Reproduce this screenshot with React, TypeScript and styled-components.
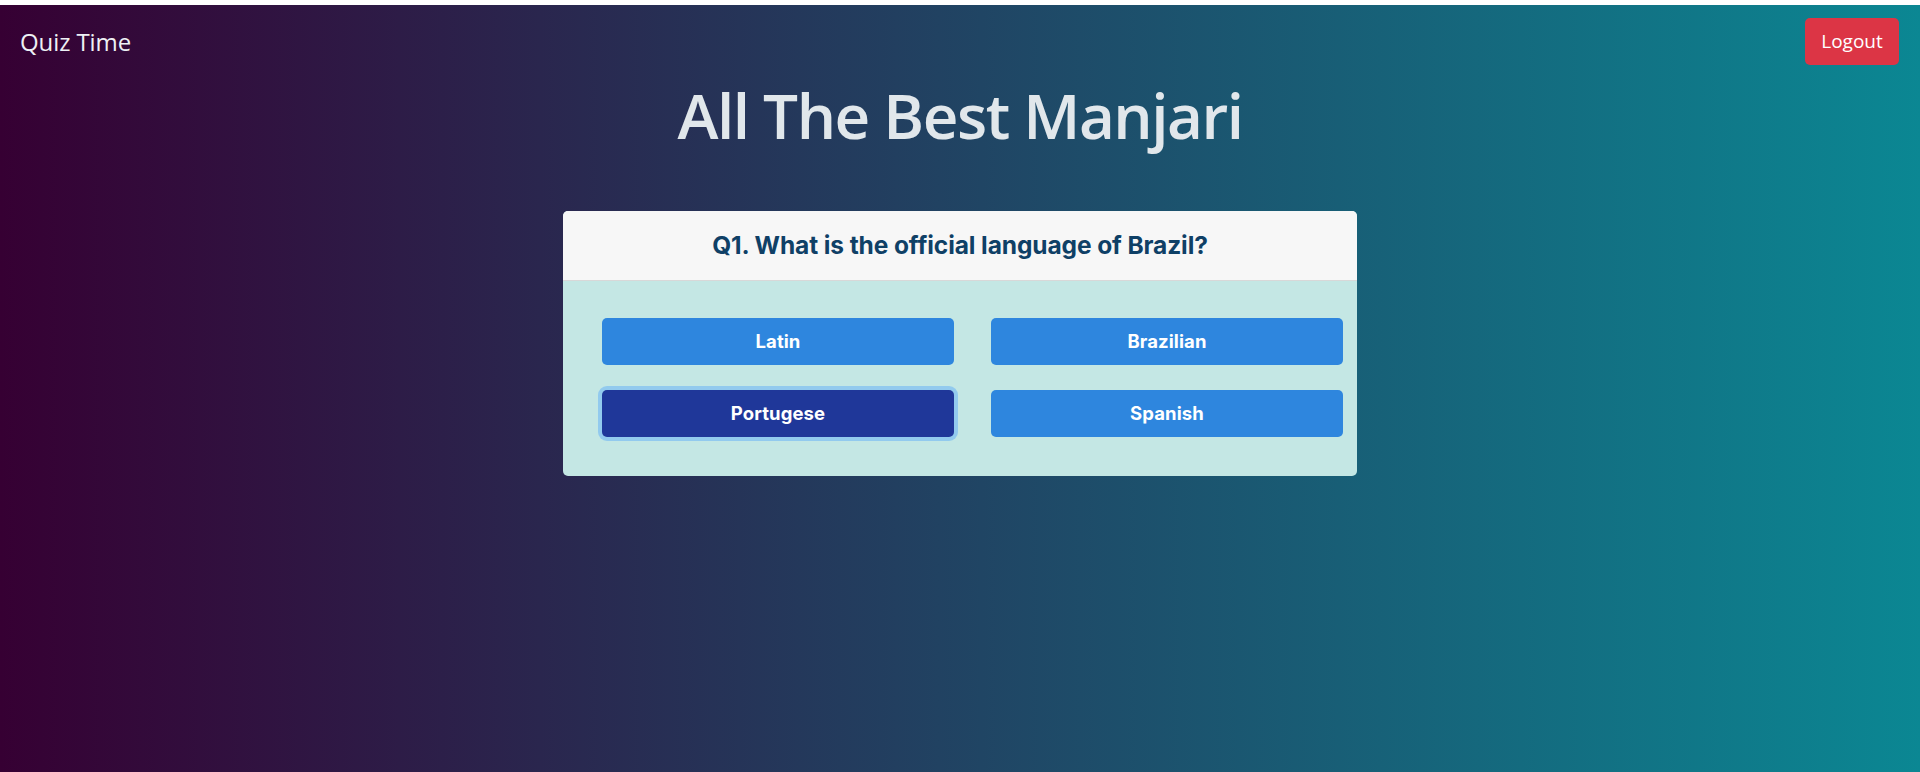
import React, { useState } from "react";
import styled, { createGlobalStyle } from "styled-components";

const GlobalStyle = createGlobalStyle`
  * { box-sizing: border-box; }
  html, body { margin: 0; padding: 0; background: #ffffff; }
  body { font-family: "Open Sans", "Noto Sans", sans-serif; }
`;

const Page = styled.div`
  padding-top: 5px;
  background: #ffffff;
`;

const Backdrop = styled.div`
  min-height: 767px;
  background: linear-gradient(to right, #360033, #0b8793);
  display: flex;
  flex-direction: column;
`;

const NavBar = styled.nav`
  display: flex;
  align-items: center;
  justify-content: space-between;
  padding: 12.7px 21px 12.5px 20px;
`;

const Brand = styled.span`
  font-family: "Open Sans", sans-serif;
  font-size: 24px;
  color: #eef1f5;
  letter-spacing: -0.1px;
`;

const LogoutButton = styled.button`
  font-family: "Open Sans", sans-serif;
  font-size: 19px;
  color: #ffffff;
  background: #dc3545;
  border: none;
  border-radius: 5px;
  height: 47px;
  width: 94px;
  padding: 0;
  cursor: pointer;
`;

const Title = styled.h1`
  margin: 0.7px 0 0;
  text-align: center;
  font-family: "Open Sans", sans-serif;
  font-weight: 600;
  font-size: 62px;
  line-height: 1.2;
  color: #e1e7eb;
  letter-spacing: -1.5px;
`;

const Card = styled.section`
  width: 794px;
  margin: 59px auto 0;
  border-radius: 5px;
  overflow: hidden;
  background: #c4e7e4;
`;

const CardHeader = styled.header`
  background: #f7f7f7;
  border-bottom: 1px solid #d8d8d8;
  padding: 19px 0 20px;
  text-align: center;
`;

const Question = styled.h5`
  margin: 0;
  font-family: Inter, Roboto, sans-serif;
  font-weight: 700;
  font-size: 24.5px;
  line-height: 30px;
  color: #0f4066;
  letter-spacing: -0.1px;
`;

const OptionGrid = styled.div`
  display: grid;
  grid-template-columns: 352px 352px;
  column-gap: 37px;
  row-gap: 25px;
  padding: 36.7px 14px 39px 39px;
`;

const OptionButton = styled.button<{ $selected?: boolean }>`
  height: 47px;
  border: none;
  border-radius: 5px;
  font-family: Inter, Roboto, sans-serif;
  font-weight: 700;
  font-size: 18.5px;
  color: #ffffff;
  letter-spacing: 0.1px;
  cursor: pointer;
  background: ${(p) => (p.$selected ? "#1f3799" : "#2e86de")};
  box-shadow: ${(p) => (p.$selected ? "0 0 0 4px #92caee" : "none")};
`;

const options = ["Latin", "Brazilian", "Portugese", "Spanish"];

export default function App() {
  const [selected, setSelected] = useState("Portugese");
  return (
    <Page>
      <GlobalStyle />
      <Backdrop>
        <NavBar>
          <Brand>Quiz Time</Brand>
          <LogoutButton>Logout</LogoutButton>
        </NavBar>
        <Title>All The Best Manjari</Title>
        <Card>
          <CardHeader>
            <Question>Q1. What is the official language of Brazil?</Question>
          </CardHeader>
          <OptionGrid>
            {options.map((o) => (
              <OptionButton
                key={o}
                $selected={o === selected}
                onClick={() => setSelected(o)}
              >
                {o}
              </OptionButton>
            ))}
          </OptionGrid>
        </Card>
      </Backdrop>
    </Page>
  );
}
